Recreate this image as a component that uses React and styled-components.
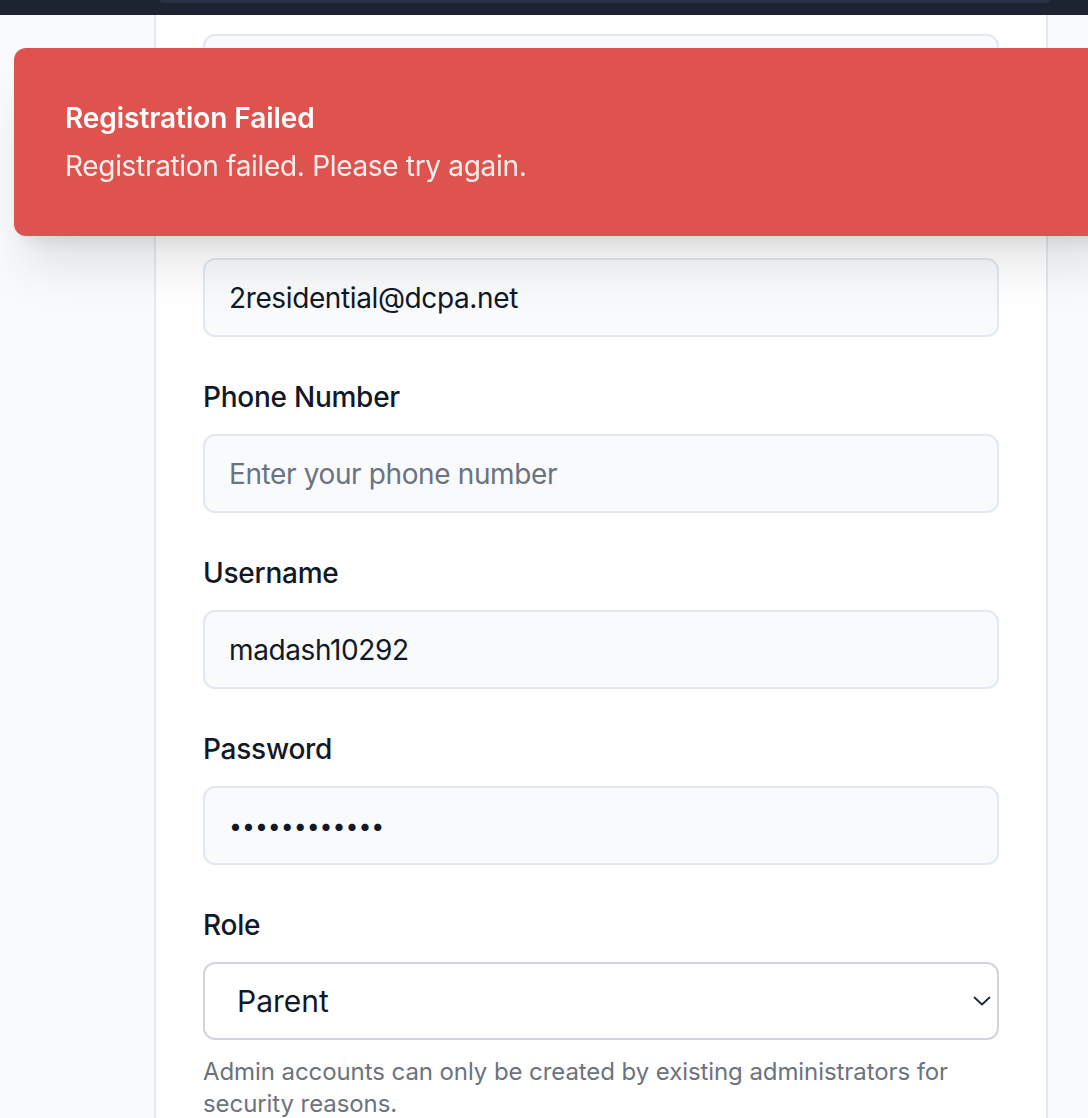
import React from "react";
import styled, { createGlobalStyle } from "styled-components";

const GlobalStyle = createGlobalStyle`
    html, body {
        margin: 0;
        padding: 0;
        background: #f8fafc;
        font-family: Inter, "Noto Sans", sans-serif;
        overflow: hidden;
    }
    * {
        box-sizing: border-box;
    }
`;

const Page = styled.div`
    min-height: 1118px;
    display: flex;
    flex-direction: column;
`;

const Header = styled.header`
    height: 15px;
    background: #1e2332;
    padding: 0 38px 0 160px;
`;

const SearchStrip = styled.div`
    height: 3px;
    background: #2b3142;
    border-radius: 0 0 6px 6px;
`;

const Main = styled.main`
    flex: 1;
    display: flex;
    padding: 0 40px 0 154px;
`;

const Card = styled.section`
    width: 894px;
    background: #ffffff;
    border-left: 2px solid #e2e8f0;
    border-right: 2px solid #e2e8f0;
    padding: 19px 47px 0;
    display: flex;
    flex-direction: column;
    gap: 40px;
`;

const Field = styled.div`
    display: flex;
    flex-direction: column;
`;

const Label = styled.label`
    font-size: 28px;
    line-height: 40px;
    font-weight: 500;
    letter-spacing: -0.25px;
    color: #111827;
    margin-bottom: 17px;
`;

const Input = styled.input`
    height: 79px;
    width: 100%;
    padding: 0 24px;
    border: 2px solid #e2e8f0;
    border-radius: 12px;
    background: #f8fafc;
    font-family: Inter, "Noto Sans", sans-serif;
    font-size: ${(props) => (props.type === "password" ? "23px" : "28px")};
    letter-spacing: ${(props) => (props.type === "password" ? "0" : "-0.38px")};
    color: #111827;
    outline: none;

    &::placeholder {
        color: #6b7280;
    }
`;

const SelectWrap = styled.div`
    position: relative;
`;

const Select = styled.select`
    appearance: none;
    width: 100%;
    height: 78px;
    padding: 0 32px;
    border: 2px solid #d1d5db;
    border-radius: 12px;
    background: #ffffff;
    font-family: Inter, "Noto Sans", sans-serif;
    font-size: 30px;
    color: #111827;
    outline: none;
`;

const Chevron = styled.svg`
    position: absolute;
    right: 8px;
    top: 34px;
    pointer-events: none;
`;

const Hint = styled.p`
    margin: 16px 0 0;
    font-size: 24px;
    line-height: 32px;
    letter-spacing: -0.08px;
    color: #6b7280;
`;

const Toast = styled.div`
    position: fixed;
    top: 48px;
    left: 14px;
    right: -40px;
    padding: 50px 51px;
    background: #df534f;
    border-radius: 12px;
    color: #ffffff;
    box-shadow: 0 40px 50px -10px rgba(0, 0, 0, 0.1), 0 16px 20px -12px rgba(0, 0, 0, 0.1);
    display: flex;
    flex-direction: column;
    gap: 8px;
`;

const ToastTitle = styled.div`
    font-size: 28px;
    line-height: 40px;
    font-weight: 600;
    letter-spacing: -0.05px;
`;

const ToastText = styled.div`
    font-size: 28px;
    line-height: 40px;
    letter-spacing: -0.32px;
    opacity: 0.9;
`;

const fields = [
    { label: "Email Address", type: "email", value: "2residential@dcpa.net" },
    { label: "Phone Number", type: "tel", placeholder: "Enter your phone number" },
    { label: "Username", type: "text", value: "madash10292" },
    { label: "Password", type: "password", value: "secretpass12" },
];

export default function App() {
    return (
        <Page>
            <GlobalStyle />
            <Header>
                <SearchStrip />
            </Header>
            <Main>
                <Card>
                    <Field>
                        <Input type="text" defaultValue="Madison Ash" />
                        <Hint>Enter your first and last name.</Hint>
                    </Field>
                    {fields.map((f) => (
                        <Field key={f.label}>
                            <Label>{f.label}</Label>
                            <Input
                                type={f.type}
                                defaultValue={f.value}
                                placeholder={f.placeholder}
                            />
                        </Field>
                    ))}
                    <Field>
                        <Label>Role</Label>
                        <SelectWrap>
                            <Select defaultValue="parent">
                                <option value="parent">Parent</option>
                                <option value="teacher">Teacher</option>
                                <option value="student">Student</option>
                            </Select>
                            <Chevron width="18" height="10" viewBox="0 0 18 10" fill="none">
                                <path d="M1.5 1.5L9 8.5L16.5 1.5" stroke="#1f2937" strokeWidth="1.8" strokeLinecap="round" strokeLinejoin="round" />
                            </Chevron>
                        </SelectWrap>
                        <Hint>
                            Admin accounts can only be created by existing administrators for
                            security reasons.
                        </Hint>
                    </Field>
                </Card>
            </Main>
            <Toast role="alert">
                <ToastTitle>Registration Failed</ToastTitle>
                <ToastText>Registration failed. Please try again.</ToastText>
            </Toast>
        </Page>
    );
}
